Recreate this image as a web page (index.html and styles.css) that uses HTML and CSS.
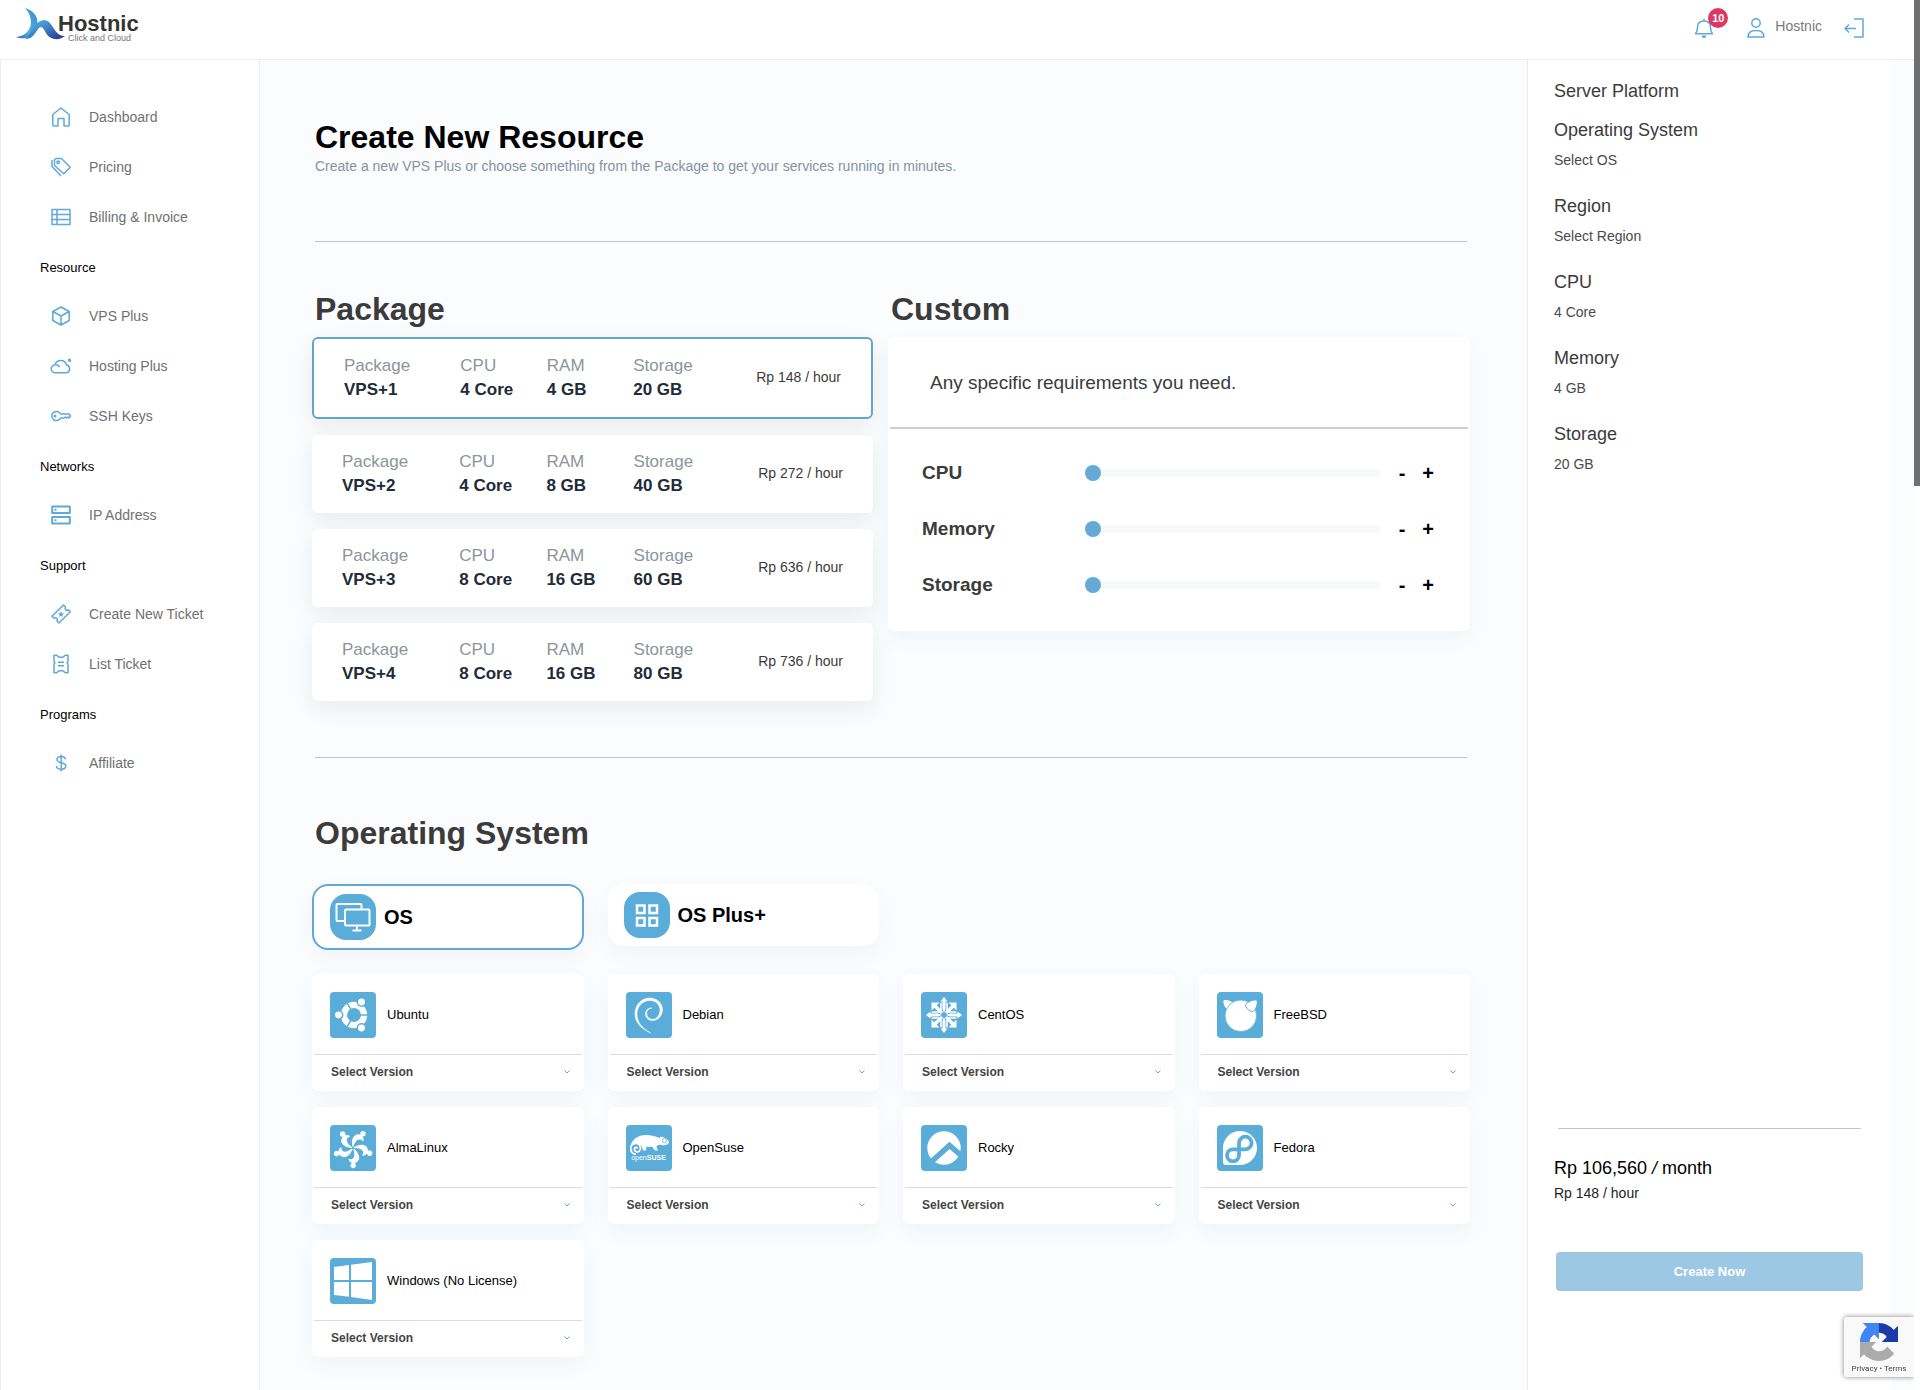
FILE: index.html
```html
<!DOCTYPE html>
<html lang="en">

<head>
    <meta charset="UTF-8">
    <meta name="viewport" content="width=device-width, initial-scale=1.0">
    <title>Hostnic - Create New Resource</title>
    <link rel="stylesheet" href="styles.css">
</head>

<body>

    <header class="topbar">
        <a href="#" class="logo">
            <svg class="logo-mark" viewBox="0 0 49 33">
                <defs>
                    <linearGradient id="waveA" x1="0" y1="1" x2="1" y2="0">
                        <stop offset="0" stop-color="#2a63b4" />
                        <stop offset="0.4" stop-color="#48b4e4" />
                        <stop offset="1" stop-color="#3f86c8" />
                    </linearGradient>
                    <linearGradient id="waveB" x1="0" y1="0" x2="1" y2="1">
                        <stop offset="0" stop-color="#55c0ec" />
                        <stop offset="0.5" stop-color="#3d7fc6" />
                        <stop offset="1" stop-color="#2b2a86" />
                    </linearGradient>
                </defs>
                <path d="M9 0C18 3 23 9 21 17C18 28 9 33 0 29C8 28 14 24 15 15C15 9 13 4 9 0Z" fill="url(#waveA)" />
                <path d="M9 31C15 27 18 13 28 12C37 12 38 29 49 28C43 33 34 32 30 25C27 19 25 17 22 21C18 27 16 31 9 31Z" fill="url(#waveB)" />
            </svg>
            <span class="logo-text">
                <strong>Hostnic</strong>
                <small>Click and Cloud</small>
            </span>
        </a>
        <nav class="topbar-actions">
            <button type="button" class="icon-btn bell" aria-label="Notifications">
                <svg class="icon" viewBox="0 0 20 20">
                    <path d="M1.500 15.800h17c-1.800-2-2-3.500-2-6.500 0-4-2.700-6.300-6.500-6.300S3.500 5.300 3.500 9.300c0 3-.2 4.500-2 6.500zM10 1v2" />
                    <path d="M8 18h4a2 1.500 0 0 1-4 0z" fill="#5ea9d6" stroke-width="1" />
                </svg>
                <span class="badge">10</span>
            </button>
            <a href="#" class="user">
                <svg class="icon" viewBox="0 0 20 20">
                    <circle cx="10" cy="5" r="4.200" />
                    <path d="M2 19c0-4 2.500-6.500 8-6.500s8 2.500 8 6.500z" />
                </svg>
                Hostnic
            </a>
            <a href="#" class="icon-btn" aria-label="Log out">
                <svg class="icon" viewBox="0 0 20 20">
                    <path d="M10 1h9v18h-9M12 10.500H1M5 6.500l-4 4 4 4" />
                </svg>
            </a>
        </nav>
    </header>

    <div class="layout">

        <nav class="sidebar">
            <a href="#">
                <svg class="icon" viewBox="0 0 20 20">
                    <path d="M1.800 7.500L10 1l8.200 6.500V18a1 1 0 0 1-1 1H13v-7.500H7V19H2.800a1 1 0 0 1-1-1z" />
                </svg>
                Dashboard
            </a>
            <a href="#">
                <svg class="icon" viewBox="0 0 20 20">
                    <path d="M3.500 3.500a2 2 0 0 1 2-2h5l8.700 8.700-6.500 6.500L3.500 8.500zM1 3v6.500l9 9.500" />
                    <circle cx="7.200" cy="5.200" r="1.300" />
                </svg>
                Pricing
            </a>
            <a href="#">
                <svg class="icon" viewBox="0 0 20 20">
                    <path d="M1 2.500h18v15H1zM1 7.500h18M1 12.500h18M6 2.500v15" />
                </svg>
                Billing &amp; Invoice
            </a>
            <h6>Resource</h6>
            <a href="#">
                <svg class="icon" viewBox="0 0 20 20">
                    <path d="M10 1l8.200 4.500v9L10 19l-8.200-4.500v-9zM1.800 5.500L10 10l8.200-4.500M10 10v9" />
                </svg>
                VPS Plus
            </a>
            <a href="#">
                <svg class="icon" viewBox="0 0 20 20">
                    <path d="M4.500 16.800a4 4 0 0 1-.5-8A6 6 0 0 1 15.500 9a4 4 0 0 1 0 7.800zM4 8.800a4 4 0 0 1 4.500 2.500" />
                    <circle cx="18.500" cy="4.200" r="1" fill="#5ea9d6" />
                </svg>
                Hosting Plus
            </a>
            <a href="#">
                <svg class="icon" viewBox="0 0 20 20">
                    <path d="M9.500 8H18l1.500 2-1.500 2-1.200-1-1.200 1-1.200-1-1.200 1H9.500a4.600 4.600 0 1 1 0-4z" />
                    <circle cx="4" cy="10" r=".8" />
                </svg>
                SSH Keys
            </a>
            <h6>Networks</h6>
            <a href="#">
                <svg class="icon icon-thick" viewBox="0 0 20 20">
                    <path d="M1.200 1.500h17.600v6.500H1.200zM1.200 12h17.600v6.500H1.200zM3.500 4.800h2M3.500 15.300h2" />
                </svg>
                IP Address
            </a>
            <h6>Support</h6>
            <a href="#">
                <svg class="icon" viewBox="0 0 20 20">
                    <path d="M12.500 1l2 2a2 2 0 0 0 2.800 2.800l2 2L8 19l-2-2a2 2 0 0 0-2.800-2.800l-2.200-2z" />
                    <path d="M10 7l.9 2.200 2.300.1-1.800 1.500.6 2.300-2-1.300-2 1.300.6-2.300-1.800-1.500 2.300-.1z" fill="#5ea9d6" stroke="none" />
                </svg>
                Create New Ticket
            </a>
            <a href="#">
                <svg class="icon" viewBox="0 0 20 20">
                    <path d="M3 1.200h2.500L8 3.200h4l2.500-2H17v6l-1 1.400 1 1.400v8.800h-2.500L12 16.800H8l-2.500 2H3V10l1-1.400-1-1.400zM7 8.300h6M7 11.700h6" />
                </svg>
                List Ticket
            </a>
            <h6>Programs</h6>
            <a href="#">
                <svg class="icon" viewBox="0 0 20 20">
                    <path d="M14.500 6.300C14.200 4.300 12.500 3.500 10.200 3.500 7.500 3.500 6 4.800 6 6.600c0 4.300 8.800 2.200 8.800 6.500 0 2-1.800 3.200-4.500 3.200S5.600 15.200 5.400 13M10.200 1.500v17" />
                </svg>
                Affiliate
            </a>
        </nav>

        <main class="content">
            <h1>Create New Resource</h1>
            <p class="subtitle">Create a new VPS Plus or choose something from the Package to get your services running in minutes.</p>
            <hr>

            <div class="plans">
                <section>
                    <h2>Package</h2>
                    <div class="package-list">
                        <button type="button" class="package active">
                            <span class="spec">Package<b>VPS+1</b></span>
                            <span class="spec">CPU<b>4 Core</b></span>
                            <span class="spec">RAM<b>4 GB</b></span>
                            <span class="spec">Storage<b>20 GB</b></span>
                            <span class="price">Rp 148 / hour</span>
                        </button>
                        <button type="button" class="package">
                            <span class="spec">Package<b>VPS+2</b></span>
                            <span class="spec">CPU<b>4 Core</b></span>
                            <span class="spec">RAM<b>8 GB</b></span>
                            <span class="spec">Storage<b>40 GB</b></span>
                            <span class="price">Rp 272 / hour</span>
                        </button>
                        <button type="button" class="package">
                            <span class="spec">Package<b>VPS+3</b></span>
                            <span class="spec">CPU<b>8 Core</b></span>
                            <span class="spec">RAM<b>16 GB</b></span>
                            <span class="spec">Storage<b>60 GB</b></span>
                            <span class="price">Rp 636 / hour</span>
                        </button>
                        <button type="button" class="package">
                            <span class="spec">Package<b>VPS+4</b></span>
                            <span class="spec">CPU<b>8 Core</b></span>
                            <span class="spec">RAM<b>16 GB</b></span>
                            <span class="spec">Storage<b>80 GB</b></span>
                            <span class="price">Rp 736 / hour</span>
                        </button>
                    </div>
                </section>

                <section>
                    <h2>Custom</h2>
                    <div class="custom">
                        <p class="custom-head">Any specific requirements you need.</p>
                        <div class="custom-body">
                            <div class="slider-row">
                                <label for="cpu">CPU</label>
                                <input type="range" id="cpu" min="0" max="32" value="0">
                                <button type="button" aria-label="Less CPU">-</button>
                                <button type="button" aria-label="More CPU">+</button>
                            </div>
                            <div class="slider-row">
                                <label for="memory">Memory</label>
                                <input type="range" id="memory" min="0" max="64" value="0">
                                <button type="button" aria-label="Less memory">-</button>
                                <button type="button" aria-label="More memory">+</button>
                            </div>
                            <div class="slider-row">
                                <label for="storage">Storage</label>
                                <input type="range" id="storage" min="0" max="500" value="0">
                                <button type="button" aria-label="Less storage">-</button>
                                <button type="button" aria-label="More storage">+</button>
                            </div>
                        </div>
                    </div>
                </section>
            </div>

            <hr>

            <section class="os-section">
                <h2>Operating System</h2>
                <div class="os-grid os-tabs">
                    <button type="button" class="os-tab active">
                        <svg class="tile round" viewBox="0 0 46 46">
                            <g fill="none" stroke="#fff" stroke-width="2">
                                <path d="M14.500 27H7.500a1 1 0 0 1-1-1V11a1 1 0 0 1 1-1h23a1 1 0 0 1 1 1v4" />
                                <rect x="15" y="15.500" width="24.500" height="16" rx="1" />
                                <path d="M27 32v4.500M22.500 36.500h9" />
                            </g>
                        </svg>
                        OS
                    </button>
                    <button type="button" class="os-tab">
                        <svg class="tile round" viewBox="0 0 46 46">
                            <path d="M13 13.500h7.500V21H13zM25.500 13.500H33V21h-7.500zM13 26h7.500v7.500H13zM25.500 26H33v7.500h-7.500z" fill="none" stroke="#fff" stroke-width="2.500" />
                        </svg>
                        OS Plus+
                    </button>
                </div>

                <div class="os-grid">
                    <div class="os-card">
                        <div class="os-name">
                            <svg class="tile" viewBox="0 0 46 46">
                                <circle cx="24" cy="23" r="10" fill="none" stroke="#fff" stroke-width="6.500" />
                                <path d="M24 23h16M24 23L16 9.100M24 23l-8 13.900" stroke="#5aadd9" stroke-width="1.500" />
                                <circle cx="24" cy="23" r="6.800" fill="#5aadd9" />
                                <g fill="#fff" stroke="#5aadd9" stroke-width="1.500">
                                    <circle cx="8.500" cy="23" r="4.200" />
                                    <circle cx="31.500" cy="10" r="4.200" />
                                    <circle cx="31.500" cy="36" r="4.200" />
                                </g>
                            </svg>
                            <span>Ubuntu</span>
                        </div>
                        <select aria-label="Ubuntu version">
                            <option>Select Version</option>
                        </select>
                    </div>
                    <div class="os-card">
                        <div class="os-name">
                            <svg class="tile" viewBox="0 0 46 46">
                                <path d="M25 41C15 37 9 30 9 22C9 13 15 6 24 6C31 6 36 11 36.500 17C36.500 24 32 28.500 26.500 28.500C22 28.500 19 25 19.500 21C20 17.500 23 15.500 26 16C22.500 16.500 20.700 18.500 20.700 21.500C20.700 25 23.500 27.500 27 27.300C31.500 27 34.500 22 34 17C33 11.500 29 8.500 24 8.500C16 8.500 11 15 11 22C11 30 16 36.500 25 41Z" fill="#fff" stroke="#fff" stroke-width=".5" />
                            </svg>
                            <span>Debian</span>
                        </div>
                        <select aria-label="Debian version">
                            <option>Select Version</option>
                        </select>
                    </div>
                    <div class="os-card">
                        <div class="os-name">
                            <svg class="tile" viewBox="0 0 46 46">
                                <defs>
                                    <g id="centosArm" fill="#fff">
                                        <path d="M23 5l3.500 4.500h-2V17L23 21l-1.500-4V9.500h-2z" />
                                        <path d="M19.200 11v7l1.600 2.500v-10zM26.800 11v7l-1.600 2.500v-10z" />
                                        <path d="M35.500 10.500v8l-2.700-2.700L26 22l-2-2 6.300-6.700-2.800-2.800z" />
                                    </g>
                                </defs>
                                <use href="#centosArm" />
                                <use href="#centosArm" transform="rotate(90 23 23)" />
                                <use href="#centosArm" transform="rotate(180 23 23)" />
                                <use href="#centosArm" transform="rotate(270 23 23)" />
                            </svg>
                            <span>CentOS</span>
                        </div>
                        <select aria-label="CentOS version">
                            <option>Select Version</option>
                        </select>
                    </div>
                    <div class="os-card">
                        <div class="os-name">
                            <svg class="tile" viewBox="0 0 46 46">
                                <path d="M6.500 8.500C9 7.500 13 8.500 15.500 10.500L9.500 17C7 14 6 10.500 6.500 8.500Z" fill="#fff" />
                                <circle cx="23.800" cy="23.800" r="15.800" fill="#fff" stroke="#5aadd9" stroke-width=".8" />
                                <path d="M40 8C41 12 39 18 35.500 19.500C32 19.500 28.500 16 28.500 12.500C31 9.500 36 7.500 40 8Z" fill="#fff" stroke="#5aadd9" stroke-width="1" />
                            </svg>
                            <span>FreeBSD</span>
                        </div>
                        <select aria-label="FreeBSD version">
                            <option>Select Version</option>
                        </select>
                    </div>
                    <div class="os-card">
                        <div class="os-name">
                            <svg class="tile" viewBox="0 0 46 46">
                                <defs>
                                    <g id="almaArm">
                                        <path d="M23 21.500C21.500 15 23.500 9.500 28.500 9.800C32 10 33.500 12.500 33 16C31.500 14 29.500 13.500 27.500 14.500C25 16 24 18.500 23 21.500Z" fill="#fff" stroke="#fff" stroke-linejoin="round" />
                                        <circle cx="33" cy="8.800" r="2.700" fill="#fff" />
                                    </g>
                                </defs>
                                <use href="#almaArm" />
                                <use href="#almaArm" transform="rotate(72 23 23)" />
                                <use href="#almaArm" transform="rotate(144 23 23)" />
                                <use href="#almaArm" transform="rotate(216 23 23)" />
                                <use href="#almaArm" transform="rotate(288 23 23)" />
                            </svg>
                            <span>AlmaLinux</span>
                        </div>
                        <select aria-label="AlmaLinux version">
                            <option>Select Version</option>
                        </select>
                    </div>
                    <div class="os-card">
                        <div class="os-name">
                            <svg class="tile" viewBox="0 0 46 46">
                                <path d="M4.500 21C6 14 13 9.500 21 10C27 10.500 31 12 34 13L34.500 11.500C39 12.500 42.500 14 43 17.500C42.500 20 39 20.500 35.500 20C33 19.500 31 20 30.500 22L32 25.500H29L26 21.500C24 22 22 22 20.500 21.500L20 25.500H17L15.500 21C13 19 10 18 8 19.500Z" fill="#fff" />
                                <circle cx="38.500" cy="15.500" r="2.200" fill="#fff" stroke="#5aadd9" stroke-width=".8" />
                                <path d="M10 29C6.500 29.500 4.500 26.500 4.800 23C5.200 19.500 8 17.800 11 18.500C14.500 19.500 15.500 23.500 13.500 26C11.500 28 8.200 26.500 8.300 24C8.500 22 11 21.800 11.300 23.500" fill="none" stroke="#fff" stroke-width="1.700" />
                                <text x="22.500" y="35" class="suse-text">open<tspan class="suse-bold">SUSE</tspan></text>
                            </svg>
                            <span>OpenSuse</span>
                        </div>
                        <select aria-label="OpenSuse version">
                            <option>Select Version</option>
                        </select>
                    </div>
                    <div class="os-card">
                        <div class="os-name">
                            <svg class="tile" viewBox="0 0 46 46">
                                <circle cx="23" cy="23" r="16.700" fill="#fff" />
                                <path d="M9 38L28.500 20.500L42 32" fill="none" stroke="#5aadd9" stroke-width="5.500" />
                            </svg>
                            <span>Rocky</span>
                        </div>
                        <select aria-label="Rocky version">
                            <option>Select Version</option>
                        </select>
                    </div>
                    <div class="os-card">
                        <div class="os-name">
                            <svg class="tile" viewBox="0 0 46 46">
                                <path d="M6 23a17 17 0 1 1 17 17H9a3 3 0 0 1-3-3z" fill="#fff" />
                                <path d="M22 24.500V18a6.300 6.300 0 1 1 6.300 6.300H16a6 6 0 1 0 6 6z" fill="none" stroke="#5aadd9" stroke-width="3.800" />
                            </svg>
                            <span>Fedora</span>
                        </div>
                        <select aria-label="Fedora version">
                            <option>Select Version</option>
                        </select>
                    </div>
                    <div class="os-card">
                        <div class="os-name">
                            <svg class="tile" viewBox="0 0 46 46">
                                <path d="M4 9l15-2v15H4zM21 6.700L42 4v18H21zM4 24h15v14.700L4 37zM21 24h21v18l-21-3z" fill="#fff" />
                            </svg>
                            <span>Windows (No License)</span>
                        </div>
                        <select aria-label="Windows version">
                            <option>Select Version</option>
                        </select>
                    </div>
                </div>
            </section>
        </main>

        <aside class="summary">
            <div>
                <h3>Server Platform</h3>
                <h3>Operating System</h3>
                <p>Select OS</p>
                <h3>Region</h3>
                <p>Select Region</p>
                <h3>CPU</h3>
                <p>4 Core</p>
                <h3>Memory</h3>
                <p>4 GB</p>
                <h3>Storage</h3>
                <p>20 GB</p>
            </div>
            <div class="total">
                <div class="month">Rp 106,560 <i>/</i> month</div>
                <div class="hour">Rp 148 / hour</div>
                <button type="button" disabled>Create Now</button>
            </div>
        </aside>

    </div>

    <div class="scroll-thumb"></div>

    <div class="recaptcha">
        <svg viewBox="0 0 64 64">
            <path fill="#1c3aa9" d="M64 31.955l-.033-1.370V4.687l-7.160 7.160C50.948 4.674 42.033.093 32.050.093c-10.400 0-19.622 4.960-25.458 12.640l11.736 11.860a15.550 15.550 0 0 1 4.754-5.334c2.050-1.600 4.952-2.906 8.968-2.906.485 0 .860.057 1.135.163 4.976.393 9.288 3.140 11.828 7.124l-8.307 8.307L64 31.953" />
            <path fill="#4285f4" d="M31.862.094l-1.370.033H4.594l7.160 7.160C4.580 13.147 0 22.060 0 32.046c0 10.400 4.960 19.622 12.640 25.458L24.500 45.768a15.550 15.550 0 0 1-5.334-4.754c-1.600-2.050-2.906-4.952-2.906-8.968 0-.485.057-.860.163-1.135.393-4.976 3.140-9.288 7.124-11.828l8.307 8.307L31.860.095" />
            <path fill="#ababab" d="M.001 32.045l.033 1.370v25.898l7.160-7.160c5.860 7.173 14.774 11.754 24.760 11.754 10.400 0 19.622-4.960 25.458-12.640l-11.736-11.860a15.550 15.550 0 0 1-4.754 5.334c-2.050 1.600-4.952 2.906-8.968 2.906-.485 0-.860-.057-1.135-.163-4.976-.393-9.288-3.140-11.828-7.124l8.307-8.307c-10.522.040-22.400.066-27.295-.005" />
        </svg>
        <div><a href="#">Privacy</a> • <a href="#">Terms</a></div>
    </div>

</body>

</html>
```
FILE: styles.css
```css
* {
    box-sizing: border-box;
}

body {
    margin: 0;
    padding-right: 6px;
    min-height: 100vh;
    display: flex;
    flex-direction: column;
    font-family: "Liberation Sans", Arial, sans-serif;
    font-size: 14px;
    color: #3b3b3b;
    background: #fff;
}

h1,
h2,
h3,
h6,
p {
    margin: 0;
}

a {
    color: inherit;
    text-decoration: none;
}

button,
select {
    font-family: inherit;
    color: inherit;
    border: none;
    background: none;
    padding: 0;
    cursor: pointer;
}

.icon {
    width: 20px;
    height: 20px;
    flex: none;
    fill: none;
    stroke: #5ea9d6;
    stroke-width: 1.5;
    stroke-linejoin: round;
    overflow: visible;
}

.icon-thick {
    stroke-width: 2;
}

/* Top bar */
.topbar {
    display: flex;
    justify-content: space-between;
    height: 60px;
    padding: 8px 50px 0 16px;
    border-bottom: 1px solid #eeeeee;
}

.logo {
    display: flex;
    align-items: flex-start;
}

.logo-mark {
    width: 49px;
    height: 33px;
}

.logo-text {
    display: flex;
    flex-direction: column;
    padding-top: 6px;
    margin-left: -7px;
}

.logo-text strong {
    font-size: 22px;
    line-height: 20px;
    color: #333;
}

.logo-text small {
    font-size: 9px;
    line-height: 9px;
    padding-left: 10px;
    color: #777;
}

.topbar-actions {
    display: flex;
    align-items: flex-start;
    padding-top: 10px;
}

.icon-btn {
    display: flex;
}

.bell {
    position: relative;
    margin-right: 32px;
}

.badge {
    position: absolute;
    left: 14px;
    top: -10px;
    width: 20px;
    height: 20px;
    border-radius: 50%;
    background: #dc3862;
    color: #fff;
    font-size: 11px;
    font-weight: bold;
    line-height: 20px;
    text-align: center;
}

.user {
    display: flex;
    gap: 9px;
    margin-right: 22px;
    line-height: 16px;
    color: #7a7a7a;
}

/* Layout */
.layout {
    flex: 1;
    display: grid;
    grid-template-columns: 260px 1fr 387px;
}

.sidebar {
    padding-top: 32px;
    border: 1px solid #eeeeee;
    border-width: 0 1px;
}

.sidebar a {
    display: flex;
    align-items: center;
    gap: 18px;
    height: 50px;
    padding-left: 50px;
    color: #707070;
}

.sidebar h6 {
    padding: 2px 0 0 39px;
    font-size: 13px;
    font-weight: normal;
    line-height: 47px;
    color: #000;
}

.content {
    padding: 59px 57px 32px 52px;
    background: #fbfcfe;
}

h1,
h2 {
    font-size: 32px;
    line-height: 36px;
    padding-left: 3px;
}

h1 {
    color: #000;
}

.subtitle {
    padding-left: 3px;
    line-height: 22px;
    color: #8791a1;
}

hr {
    height: 1px;
    margin: 0 3px;
    border: none;
    background: #bfc1c4;
}

.subtitle + hr {
    margin-top: 64px;
}

/* Packages */
.plans {
    display: grid;
    grid-template-columns: 561fr 582fr;
    align-items: start;
    gap: 15px;
    margin: 49px 0 56px;
}

.plans h2 {
    margin-bottom: 10px;
}

.package-list {
    display: flex;
    flex-direction: column;
    gap: 16px;
}

.package {
    display: grid;
    grid-template-columns: 23.4% 17.4% 17.4% 1fr auto;
    align-items: center;
    padding: 15px 30px;
    border-radius: 6px;
    background: #fff;
    box-shadow: 0 8px 24px rgba(0, 0, 0, 0.07);
    text-align: left;
    font-size: 14px;
}

.package.active {
    border: 2px solid #5ea9c8;
}

.spec {
    font-size: 17px;
    line-height: 24px;
    color: #8c949c;
}

.spec b {
    display: block;
    color: #222b38;
}

.price {
    padding-bottom: 2px;
}

/* Custom plan */
.custom {
    padding: 0 2px;
    border-radius: 6px;
    background: #fff;
    box-shadow: 0 8px 24px rgba(0, 0, 0, 0.04);
}

.custom-head {
    padding: 2px 40px 0;
    font-size: 19px;
    line-height: 88px;
    border-bottom: 2px solid #cfcfcf;
}

.custom-body {
    padding: 16px 28px 18px 32px;
}

.slider-row {
    display: grid;
    grid-template-columns: 163px 1fr 34px 26px;
    align-items: center;
    height: 56px;
}

.slider-row label {
    font-size: 19px;
    font-weight: bold;
}

.slider-row button {
    width: 24px;
    justify-self: end;
    font-size: 20px;
    font-weight: bold;
    color: #000;
}

.slider-row input {
    appearance: none;
    width: 100%;
    height: 8px;
    margin: 0;
    border-radius: 4px;
    background: #f7f8f9;
}

.slider-row input::-webkit-slider-thumb {
    appearance: none;
    width: 16px;
    height: 16px;
    border-radius: 50%;
    background: #65aad7;
}

/* Operating systems */
.os-section {
    margin-top: 57px;
}

.os-section h2 {
    margin-bottom: 33px;
}

.os-grid {
    display: grid;
    grid-template-columns: repeat(4, 1fr);
    gap: 16px 24px;
}

.os-tabs {
    align-items: start;
    margin-bottom: 24px;
}

.tile {
    width: 46px;
    height: 46px;
    flex: none;
    border-radius: 4px;
    background: #5aadd9;
}

.tile.round {
    border-radius: 16px;
}

.os-tab {
    display: flex;
    align-items: center;
    gap: 8px;
    padding: 8px 16px;
    border-radius: 16px;
    background: #fff;
    box-shadow: 0 8px 24px rgba(0, 0, 0, 0.04);
    font-size: 20px;
    font-weight: bold;
    color: #000;
}

.os-tab.active {
    border: 2px solid #5ea9d6;
}

.os-card {
    border: 2px solid #fff;
    border-radius: 6px;
    background: #fff;
    box-shadow: 0 8px 24px rgba(0, 0, 0, 0.04);
}

.os-name {
    display: flex;
    align-items: center;
    gap: 11px;
    padding: 16px;
    border-bottom: 1px solid #dcdcdc;
    font-size: 13px;
    color: #000;
}

.os-name span {
    padding-bottom: 2px;
}

.os-card select {
    appearance: none;
    display: block;
    width: 100%;
    height: 34px;
    padding: 0 17px;
    font-size: 12px;
    font-weight: bold;
    color: #444;
    background: url("data:image/svg+xml,%3Csvg xmlns='http://www.w3.org/2000/svg' viewBox='0 0 6 4'%3E%3Cpath d='M.5.5L3 3 5.500.5' fill='none' stroke='%236fa9b8'/%3E%3C/svg%3E") no-repeat right 12px center / 6px 4px;
}

.suse-text {
    font-size: 7px;
    fill: #fff;
    text-anchor: middle;
}

.suse-bold {
    font-weight: bold;
}

/* Summary */
.summary {
    display: flex;
    flex-direction: column;
    justify-content: space-between;
    padding: 19px 29px 99px 26px;
    border-left: 1px solid #ececec;
    border-right: 22px solid #fbfcfe;
}

.summary h3 {
    margin-top: 24px;
    font-size: 18px;
    font-weight: normal;
    line-height: 24px;
}

.summary h3:first-child {
    margin-top: 0;
}

.summary h3 + h3 {
    margin-top: 15px;
}

.summary p {
    margin-top: 8px;
    line-height: 20px;
    color: #4a4a4a;
}

.total {
    color: #000;
}

.total::before {
    content: "";
    display: block;
    height: 1px;
    margin: 0 2px 27px 4px;
    background: #c4c4c4;
}

.month {
    font-size: 18px;
    line-height: 24px;
}

.hour {
    margin-top: 3px;
    line-height: 20px;
    color: #222;
}

.total button {
    display: block;
    width: calc(100% - 2px);
    height: 39px;
    margin: 49px 0 0 2px;
    border-radius: 4px;
    background: #9dc8e4;
    color: #fff;
    font-size: 13px;
    font-weight: bold;
}

/* Overlays */
.scroll-thumb {
    position: absolute;
    top: 0;
    right: 0;
    width: 6px;
    height: 486px;
    background: #707070;
}

.recaptcha {
    position: fixed;
    right: 6px;
    bottom: 13px;
    width: 70px;
    height: 60px;
    padding-top: 6px;
    border-radius: 2px 0 0 2px;
    background: #f9f9f9;
    box-shadow: 0 0 5px gray;
    clip-path: inset(-6px 0 -6px -6px);
    font-family: Roboto, sans-serif;
    font-size: 8px;
    line-height: 16px;
    text-align: center;
    color: #444;
}

.recaptcha svg {
    display: block;
    width: 38px;
    height: 38px;
    margin: 0 auto;
}
```
